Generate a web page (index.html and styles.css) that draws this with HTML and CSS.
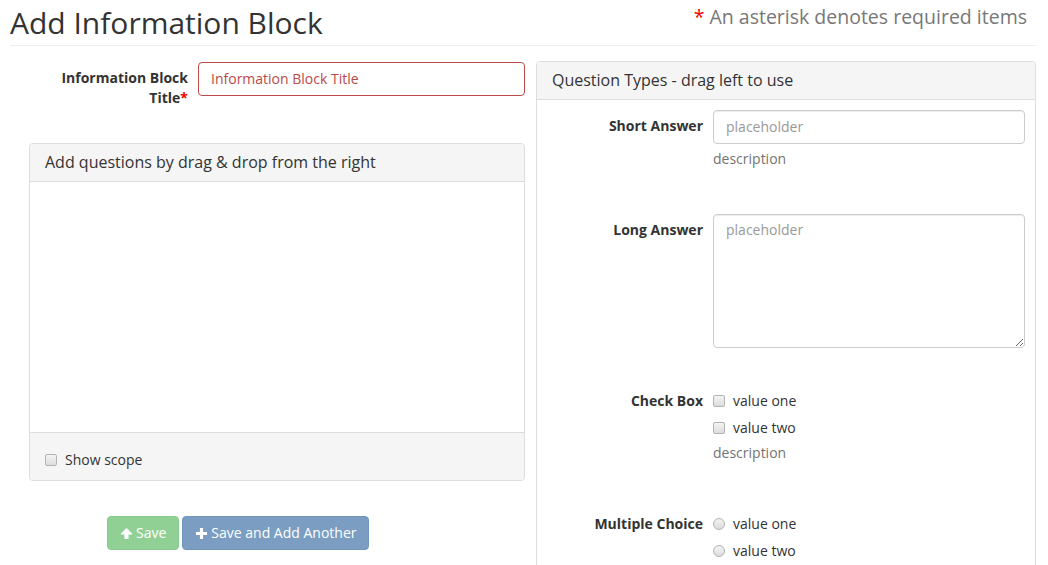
FILE: index.html
```html
<!DOCTYPE html>
<html lang="en">
<head>
<meta charset="utf-8">
<title>Add Information Block</title>
<link rel="stylesheet" href="styles.css">
</head>
<body>
<div class="page">
  <header class="page-header">
    <h1 class="title">Add Information Block</h1>
    <p class="note"><span class="req">*</span> An asterisk denotes required items</p>
  </header>
  <main class="main">
    <section class="left">
      <div class="title-row">
        <label class="title-label" for="ibt">Information Block Title<span class="req">*</span></label>
        <input id="ibt" class="title-input" type="text" value="Information Block Title">
      </div>
      <div class="panel drop-panel">
        <div class="panel-heading">Add questions by drag &amp; drop from the right</div>
        <div class="drop-body"></div>
        <div class="panel-footer">
          <label class="opt"><span class="box"></span>Show scope</label>
        </div>
      </div>
      <div class="actions">
        <button class="btn btn-save" type="button">
          <svg class="ico" viewBox="0 0 14 14" width="13" height="13"><path d="M7 1 L13 7 L13 8 L9.2 8 L9.2 13 L4.8 13 L4.8 8 L1 8 L1 7 Z" fill="#fff"/></svg>Save
        </button>
        <button class="btn btn-another" type="button">
          <svg class="ico" viewBox="0 0 14 14" width="13" height="13"><path d="M5.3 1 H8.7 V5.3 H13 V8.7 H8.7 V13 H5.3 V8.7 H1 V5.3 H5.3 Z" fill="#fff"/></svg>Save and Add Another
        </button>
      </div>
    </section>
    <aside class="panel types-panel">
      <div class="panel-heading">Question Types - drag left to use</div>
      <div class="types-body">
        <div class="q-group">
          <div class="q-label">Short Answer</div>
          <div class="q-field">
            <input class="control" type="text" placeholder="placeholder">
            <div class="help">description</div>
          </div>
        </div>
        <div class="q-group">
          <div class="q-label">Long Answer</div>
          <div class="q-field">
            <textarea class="control area" placeholder="placeholder"></textarea>
          </div>
        </div>
        <div class="q-group choice">
          <div class="q-label">Check Box</div>
          <div class="q-field options">
            <label class="opt"><span class="box"></span>value one</label>
            <label class="opt"><span class="box"></span>value two</label>
            <div class="help">description</div>
          </div>
        </div>
        <div class="q-group choice">
          <div class="q-label">Multiple Choice</div>
          <div class="q-field options">
            <label class="opt"><span class="box round"></span>value one</label>
            <label class="opt"><span class="box round"></span>value two</label>
            <div class="help">description</div>
          </div>
        </div>
      </div>
    </aside>
  </main>
</div>
</body>
</html>
```

FILE: styles.css
```css
* { box-sizing: border-box; }
html, body { margin: 0; padding: 0; background: #fff; }
body {
  font-family: "Open Sans", "Liberation Sans", Arial, sans-serif;
  font-size: 14px;
  line-height: 20px;
  color: #333;
}
.page { padding: 0 12px 0 10px; }

.page-header {
  display: flex;
  justify-content: space-between;
  align-items: flex-start;
  height: 46px;
  padding-top: 6px;
  border-bottom: 1px solid #eee;
  margin-right: -1px;
}
.title {
  margin: 0;
  font-size: 30px;
  line-height: 33px;
  font-weight: 400;
  color: #333;
}
.note {
  margin: 0 10px 0 0;
  font-size: 19.5px;
  line-height: 22px;
  color: #777;
}
.req { color: #e00; }

.main {
  display: grid;
  grid-template-columns: 1fr 500px;
  column-gap: 6px;
  padding-top: 15px;
  align-items: start;
}

.title-row { display: flex; padding-right: 5px; margin-top: 1px; }
.title-label {
  flex: 0 0 188px;
  padding: 6px 10px 0 30px;
  text-align: right;
  font-weight: 700;
  line-height: 20px;
}
.title-input {
  flex: 1;
  height: 34px;
  padding: 5px 12px 7px;
  border: 1px solid #b94a48;
  border-radius: 4px;
  font: inherit;
  color: #b94a48;
  background: #fff;
  outline: none;
}

.panel {
  border: 1px solid #ddd;
  border-radius: 4px;
  background: #fff;
  overflow: hidden;
}
.panel-heading {
  height: 38px;
  display: flex;
  align-items: center;
  padding: 0 15px 2px;
  background: #f5f5f5;
  border-bottom: 1px solid #ddd;
  font-size: 16px;
  color: #333;
}
.drop-panel { margin: 35px 5px 0 19px; }
.drop-body { height: 250px; }
.panel-footer {
  height: 48px;
  padding: 17px 15px 0;
  background: #f5f5f5;
  border-top: 1px solid #ddd;
}

.opt {
  display: flex;
  align-items: center;
  height: 20px;
  color: #333;
}
.box {
  width: 12px;
  height: 12px;
  margin-right: 8px;
  border: 1px solid #b3b3b3;
  border-radius: 2px;
  background: linear-gradient(#f4f4f4, #dcdcdc);
  flex: none;
}
.box.round { border-radius: 50%; }

.actions {
  display: flex;
  gap: 3px;
  margin: 35px 0 0 97px;
}
.btn {
  display: inline-flex;
  align-items: center;
  height: 34px;
  padding: 6px 12px;
  border: 1px solid transparent;
  border-radius: 4px;
  font: inherit;
  color: #fff;
  cursor: not-allowed;
}
.ico { margin-right: 3px; }
.btn-save { background: #91d094; border-color: #88ca8b; }
.btn-another { background: #7a9dc1; border-color: #7196bc; }

.types-panel { min-height: 620px; }
.types-body { padding: 10px 10px 0 0; }
.q-group { display: flex; margin-bottom: 35px; }
.q-label {
  flex: 0 0 176px;
  padding: 6px 10px 0 0;
  text-align: right;
  font-weight: 700;
}
.choice .q-label { padding-top: 8px; }
.q-field { flex: 1; }
.control {
  display: block;
  width: 100%;
  height: 34px;
  padding: 5px 12px 7px;
  border: 1px solid #ccc;
  border-radius: 4px;
  font: inherit;
  color: #555;
  background: #fff;
  outline: none;
  box-shadow: inset 0 1px 1px rgba(0,0,0,.075);
}
.control::placeholder { color: #999; }
.area { height: 134px; resize: vertical; }
.help { margin: 5px 0 10px; color: #737373; }
.options { padding-top: 8px; }
.options .help { margin-bottom: 8px; }
.options .opt + .opt { margin-top: 7px; }
```
